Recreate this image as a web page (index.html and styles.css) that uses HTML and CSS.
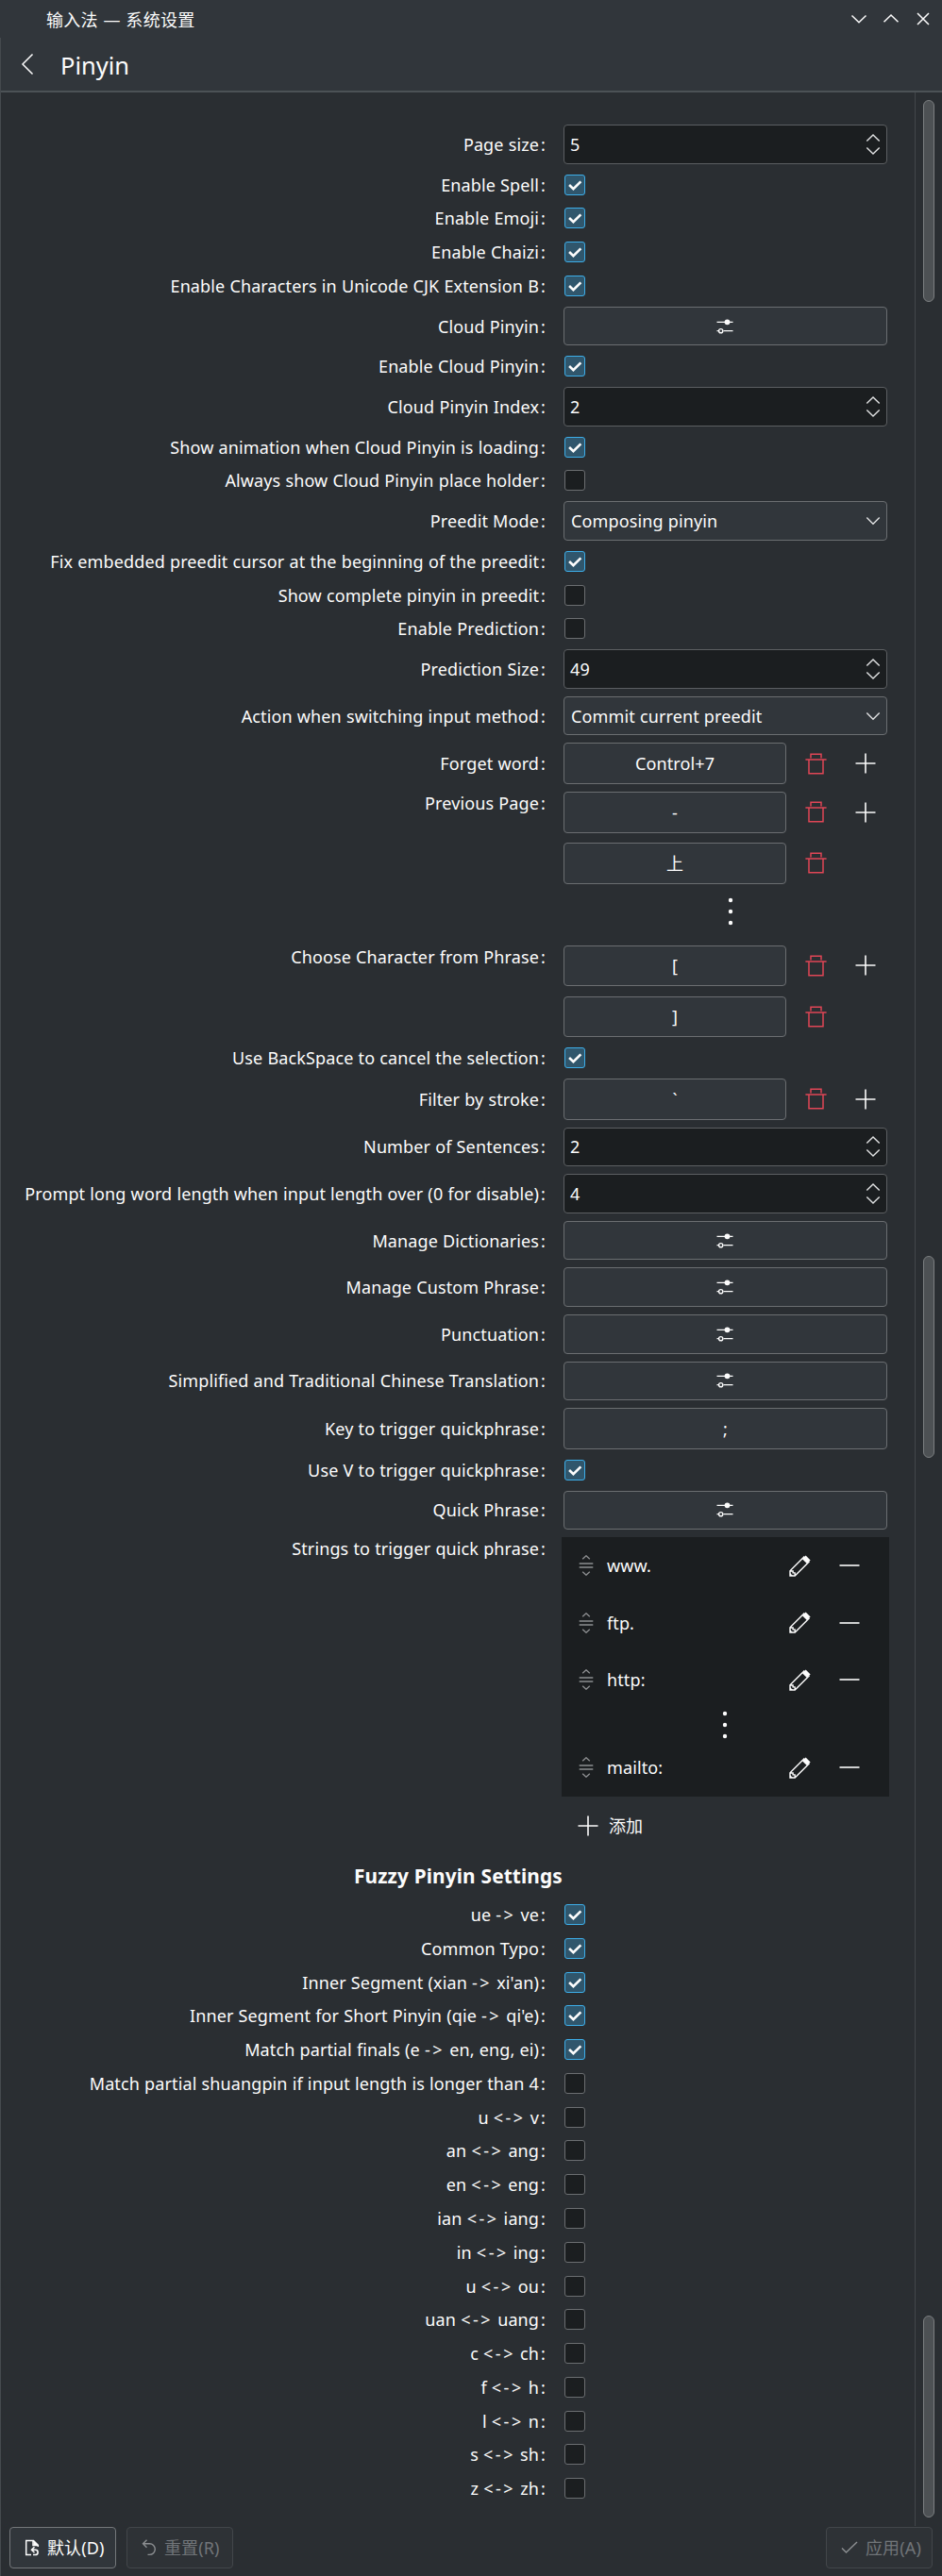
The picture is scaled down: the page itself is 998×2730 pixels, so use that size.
FILE: index.html
```html
<!DOCTYPE html>
<html lang="zh-CN">
<head>
<meta charset="utf-8">
<title>输入法 — 系统设置</title>
<link rel="stylesheet" href="styles.css">
</head>
<body>
<svg class="defs" width="0" height="0">
  <symbol id="tick" viewBox="0 0 22 22"><path d="M4.5 11 L9.3 15.6 L18 7" fill="none" stroke="#fcfcfc" stroke-width="2.9"/></symbol>
  <symbol id="sliders" viewBox="0 0 18 16"><path d="M0.5 3.3H17.5M7.5 12.7H17.5M0.5 12.7H2" fill="none" stroke="#fcfcfc" stroke-width="1.3"/><circle cx="11.5" cy="3.3" r="2.9" fill="#fcfcfc"/><circle cx="4.7" cy="12.7" r="2.1" fill="none" stroke="#fcfcfc" stroke-width="1.4"/></symbol>
  <symbol id="updown" viewBox="0 0 16 26"><path d="M1.3 9.6L8 2.9L14.7 9.6M1.3 16.4L8 23.1L14.7 16.4" fill="none" stroke="#e0e1e2" stroke-width="1.4"/></symbol>
  <symbol id="down" viewBox="0 0 16 10"><path d="M1.3 1.6L8 8.3L14.7 1.6" fill="none" stroke="#e0e1e2" stroke-width="1.4"/></symbol>
  <symbol id="trash" viewBox="0 0 23 23"><path d="M0.4 6.900H22.600M6 5.5V1.200H17V5.500M4 7V21.700H19V7" fill="none" stroke="#e04656" stroke-width="1.500"/></symbol>
  <symbol id="plus" viewBox="0 0 22 22"><path d="M0.5 11H21.5M11 0.5V21.5" fill="none" stroke="#fcfcfc" stroke-width="1.6"/></symbol>
  <symbol id="minus" viewBox="0 0 22 22"><path d="M0.5 11H21.5" fill="none" stroke="#fcfcfc" stroke-width="1.6"/></symbol>
  <symbol id="dots" viewBox="0 0 6 30"><g fill="#fcfcfc"><circle cx="3" cy="3" r="2.2"/><circle cx="3" cy="15" r="2.2"/><circle cx="3" cy="27" r="2.2"/></g></symbol>
  <symbol id="pencil" viewBox="0 0 23 23"><path d="M1 22L1 16.8L15.8 2L21 7.2L6.2 22ZM1 16.8L4.1 17V18.9H6.1L6.2 22" fill="none" stroke="#fcfcfc" stroke-width="1.4"/><path d="M14 4.2L17.6 0.4L22.6 5.4L18.8 9Z" fill="#fcfcfc"/><path d="M1 19L4 22H1Z" fill="#fcfcfc"/></symbol>
  <symbol id="handle" viewBox="0 0 16 22"><path d="M4.2 4.2L8 0.8L11.8 4.2M0.7 9H15.3M0.7 13H15.3M4.2 17.8L8 21.2L11.8 17.8" fill="none" stroke="#8c8e90" stroke-width="1.4"/></symbol>
</svg>

<div class="window">
  <header class="titlebar">
    <span class="caption">输入法 — 系统设置</span>
    <div class="winbtns">
      <svg width="18" height="18" viewBox="0 0 18 18"><path d="M1.5 5.5L9 12.7L16.500 5.500"/></svg>
      <svg width="18" height="18" viewBox="0 0 18 18"><path d="M1.5 12.2L9 5L16.500 12.200"/></svg>
      <svg width="18" height="18" viewBox="0 0 18 18"><path d="M3 3L15 15M15 3L3 15"/></svg>
    </div>
  </header>
  <div class="frame">
  <div class="pagehead">
    <svg class="back" width="14" height="24" viewBox="0 0 14 24"><path d="M12.500 1.500L2 12L12.500 22.500"/></svg>
    <h1>Pinyin</h1>
  </div>
  <div class="body">
    <main class="form">
      <div class="row box"><label>Page size<i>:</i></label><div class="field spin">5<svg><use href="#updown"/></svg></div></div>
      <div class="row"><label>Enable Spell<i>:</i></label><span class="check on"><svg><use href="#tick"/></svg></span></div>
      <div class="row"><label>Enable Emoji<i>:</i></label><span class="check on"><svg><use href="#tick"/></svg></span></div>
      <div class="row"><label>Enable Chaizi<i>:</i></label><span class="check on"><svg><use href="#tick"/></svg></span></div>
      <div class="row"><label>Enable Characters in Unicode CJK Extension B<i>:</i></label><span class="check on"><svg><use href="#tick"/></svg></span></div>
      <div class="row box"><label>Cloud Pinyin<i>:</i></label><div class="field btn"><svg><use href="#sliders"/></svg></div></div>
      <div class="row"><label>Enable Cloud Pinyin<i>:</i></label><span class="check on"><svg><use href="#tick"/></svg></span></div>
      <div class="row box"><label>Cloud Pinyin Index<i>:</i></label><div class="field spin">2<svg><use href="#updown"/></svg></div></div>
      <div class="row"><label>Show animation when Cloud Pinyin is loading<i>:</i></label><span class="check on"><svg><use href="#tick"/></svg></span></div>
      <div class="row"><label>Always show Cloud Pinyin place holder<i>:</i></label><span class="check"></span></div>
      <div class="row box"><label>Preedit Mode<i>:</i></label><div class="field combo">Composing pinyin<svg><use href="#down"/></svg></div></div>
      <div class="row"><label>Fix embedded preedit cursor at the beginning of the preedit<i>:</i></label><span class="check on"><svg><use href="#tick"/></svg></span></div>
      <div class="row"><label>Show complete pinyin in preedit<i>:</i></label><span class="check"></span></div>
      <div class="row"><label>Enable Prediction<i>:</i></label><span class="check"></span></div>
      <div class="row box"><label>Prediction Size<i>:</i></label><div class="field spin">49<svg><use href="#updown"/></svg></div></div>
      <div class="row box"><label>Action when switching input method<i>:</i></label><div class="field combo">Commit current preedit<svg><use href="#down"/></svg></div></div>
      <div class="row key"><label>Forget word<i>:</i></label><div class="keyline"><div class="field btn">Control+7</div><svg class="trash"><use href="#trash"/></svg><svg class="plus"><use href="#plus"/></svg></div></div>
      <div class="row multi"><label>Previous Page<i>:</i></label>
        <div class="keys">
          <div class="keyline"><div class="field btn">-</div><svg class="trash"><use href="#trash"/></svg><svg class="plus"><use href="#plus"/></svg></div>
          <div class="keyline"><div class="field btn">上</div><svg class="trash"><use href="#trash"/></svg></div>
          <div class="more"><svg><use href="#dots"/></svg></div>
        </div>
      </div>
      <div class="row multi"><label>Choose Character from Phrase<i>:</i></label>
        <div class="keys">
          <div class="keyline"><div class="field btn">[</div><svg class="trash"><use href="#trash"/></svg><svg class="plus"><use href="#plus"/></svg></div>
          <div class="keyline"><div class="field btn">]</div><svg class="trash"><use href="#trash"/></svg></div>
        </div>
      </div>
      <div class="row"><label>Use BackSpace to cancel the selection<i>:</i></label><span class="check on"><svg><use href="#tick"/></svg></span></div>
      <div class="row key"><label>Filter by stroke<i>:</i></label><div class="keyline"><div class="field btn">`</div><svg class="trash"><use href="#trash"/></svg><svg class="plus"><use href="#plus"/></svg></div></div>
      <div class="row box"><label>Number of Sentences<i>:</i></label><div class="field spin">2<svg><use href="#updown"/></svg></div></div>
      <div class="row box"><label>Prompt long word length when input length over (0 for disable)<i>:</i></label><div class="field spin">4<svg><use href="#updown"/></svg></div></div>
      <div class="row box"><label>Manage Dictionaries<i>:</i></label><div class="field btn"><svg><use href="#sliders"/></svg></div></div>
      <div class="row box"><label>Manage Custom Phrase<i>:</i></label><div class="field btn"><svg><use href="#sliders"/></svg></div></div>
      <div class="row box"><label>Punctuation<i>:</i></label><div class="field btn"><svg><use href="#sliders"/></svg></div></div>
      <div class="row box"><label>Simplified and Traditional Chinese Translation<i>:</i></label><div class="field btn"><svg><use href="#sliders"/></svg></div></div>
      <div class="row key"><label>Key to trigger quickphrase<i>:</i></label><div class="field btn">;</div></div>
      <div class="row"><label>Use V to trigger quickphrase<i>:</i></label><span class="check on"><svg><use href="#tick"/></svg></span></div>
      <div class="row box"><label>Quick Phrase<i>:</i></label><div class="field btn"><svg><use href="#sliders"/></svg></div></div>
      <div class="row multi strings"><label>Strings to trigger quick phrase<i>:</i></label>
        <div class="listwrap">
          <div class="list">
            <div class="item"><svg class="handle"><use href="#handle"/></svg><span>www.</span><svg class="pencil"><use href="#pencil"/></svg><svg class="plus"><use href="#minus"/></svg></div>
            <div class="item"><svg class="handle"><use href="#handle"/></svg><span>ftp.</span><svg class="pencil"><use href="#pencil"/></svg><svg class="plus"><use href="#minus"/></svg></div>
            <div class="item"><svg class="handle"><use href="#handle"/></svg><span>http:</span><svg class="pencil"><use href="#pencil"/></svg><svg class="plus"><use href="#minus"/></svg></div>
            <div class="gap"><svg><use href="#dots"/></svg></div>
            <div class="item"><svg class="handle"><use href="#handle"/></svg><span>mailto:</span><svg class="pencil"><use href="#pencil"/></svg><svg class="plus"><use href="#minus"/></svg></div>
          </div>
          <div class="add"><svg class="plus"><use href="#plus"/></svg><span>添加</span></div>
        </div>
      </div>
      <h2>Fuzzy Pinyin Settings</h2>
      <div class="row"><label>ue <b>-&gt;</b> ve<i>:</i></label><span class="check on"><svg><use href="#tick"/></svg></span></div>
      <div class="row"><label>Common Typo<i>:</i></label><span class="check on"><svg><use href="#tick"/></svg></span></div>
      <div class="row"><label>Inner Segment (xian <b>-&gt;</b> xi'an)<i>:</i></label><span class="check on"><svg><use href="#tick"/></svg></span></div>
      <div class="row"><label>Inner Segment for Short Pinyin (qie <b>-&gt;</b> qi'e)<i>:</i></label><span class="check on"><svg><use href="#tick"/></svg></span></div>
      <div class="row"><label>Match partial finals (e <b>-&gt;</b> en, eng, ei)<i>:</i></label><span class="check on"><svg><use href="#tick"/></svg></span></div>
      <div class="row"><label>Match partial shuangpin if input length is longer than 4<i>:</i></label><span class="check"></span></div>
      <div class="row"><label>u <b>&lt;-&gt;</b> v<i>:</i></label><span class="check"></span></div>
      <div class="row"><label>an <b>&lt;-&gt;</b> ang<i>:</i></label><span class="check"></span></div>
      <div class="row"><label>en <b>&lt;-&gt;</b> eng<i>:</i></label><span class="check"></span></div>
      <div class="row"><label>ian <b>&lt;-&gt;</b> iang<i>:</i></label><span class="check"></span></div>
      <div class="row"><label>in <b>&lt;-&gt;</b> ing<i>:</i></label><span class="check"></span></div>
      <div class="row"><label>u <b>&lt;-&gt;</b> ou<i>:</i></label><span class="check"></span></div>
      <div class="row"><label>uan <b>&lt;-&gt;</b> uang<i>:</i></label><span class="check"></span></div>
      <div class="row"><label>c <b>&lt;-&gt;</b> ch<i>:</i></label><span class="check"></span></div>
      <div class="row"><label>f <b>&lt;-&gt;</b> h<i>:</i></label><span class="check"></span></div>
      <div class="row"><label>l <b>&lt;-&gt;</b> n<i>:</i></label><span class="check"></span></div>
      <div class="row"><label>s <b>&lt;-&gt;</b> sh<i>:</i></label><span class="check"></span></div>
      <div class="row"><label>z <b>&lt;-&gt;</b> zh<i>:</i></label><span class="check"></span></div>
    </main>
    <aside class="scroll"><span class="thumb"></span><span class="thumb"></span><span class="thumb"></span></aside>
  </div>
  <footer class="footer">
    <div class="action"><svg width="16" height="18" viewBox="0 0 16 18"><path d="M7 16.500H1.700V1.500H9.500L14.300 6.200V8M9 2V6.500H14" fill="none" stroke="#fcfcfc" stroke-width="1.500"/><path d="M9.500 1.500L14.300 6.500H9.500Z" fill="#fcfcfc"/><path d="M10.500 8.300L7.500 11.300L10.500 14.300M7.500 11.300H11.500A2.600 2.600 0 0 1 11.500 16.500H9" fill="none" stroke="#fcfcfc" stroke-width="1.600"/></svg><span>默认(D)</span></div>
    <div class="action off"><svg width="16" height="18" viewBox="0 0 16 18"><path d="M5.500 0.800L1.500 4.800L5.500 8.800M1.500 4.800H8.500A5.800 5.800 0 0 1 8.500 16.400H6.500" fill="none" stroke="#8b8e91" stroke-width="1.400"/></svg><span>重置(R)</span></div>
    <div class="action off apply"><svg width="18" height="18" viewBox="0 0 18 18"><path d="M1 9.500L5.500 14L17 3" fill="none" stroke="#8b8e91" stroke-width="1.500"/></svg><span>应用(A)</span></div>
  </footer>
  </div>
</div>
</body>
</html>
```
FILE: styles.css
```css
* { box-sizing: border-box; }
body {
  margin: 0;
  background: #2a2e32;
  color: #fcfcfc;
  font: 18px/26px "Noto Sans", "Noto Sans CJK SC", sans-serif;
  letter-spacing: 0.12px;
  word-spacing: 0.3px;
}
svg { display: block; flex: none; }
.defs { position: absolute; }
.window { width: 998px; height: 2730px; display: flex; flex-direction: column; }

.titlebar {
  height: 40px;
  background: #31363b;
  display: flex;
  align-items: center;
  justify-content: space-between;
  padding: 2px 11px 0 49px;
}
.caption { letter-spacing: 0.3px; word-spacing: 0.6px; }
.winbtns { display: flex; gap: 16px; padding-bottom: 2px; }
.winbtns path, .back path { fill: none; stroke: #fcfcfc; stroke-width: 1.5; }

.frame { flex: 1; display: flex; flex-direction: column; border-left: 1px solid #454a4e; }
.pagehead {
  height: 58px;
  background: #31363b;
  border-bottom: 2px solid #4c5256;
  display: flex;
  align-items: center;
  gap: 28px;
  padding-left: 21px;
}
h1 { margin: 1px 0 0; font-size: 25.5px; font-weight: 400; line-height: 36px; letter-spacing: 0; }

.body { display: flex; height: 2579px; }
.form {
  width: 968px;
  padding-top: 34.2px;
  display: flex;
  flex-direction: column;
  gap: 8px;
}
.row { display: flex; align-items: center; height: 27.77px; }
.row.box { height: 41.6px; }
.row.key { height: 43.7px; }
.row.multi { height: auto; align-items: flex-start; }
label { width: 577px; margin-right: 19px; text-align: right; white-space: nowrap; }
label i { font-style: normal; margin-left: 2px; }
label b { font-weight: 400; letter-spacing: 2.5px; }
.multi > label { line-height: 24px; }

.check {
  width: 22px;
  height: 22px;
  margin-left: 1px;
  border: 1px solid #6b6e71;
  border-radius: 3px;
  background: #1b1e20;
}
.check.on { border-color: #3daee9; background: #30566c; }
.check svg { width: 20px; height: 20px; }

.field {
  width: 343px;
  height: 100%;
  border: 1px solid #6b6e71;
  border-radius: 4px;
  display: flex;
  align-items: center;
  justify-content: space-between;
  background: #31363b;
}
.spin { background: #1b1e20; padding: 0 6px 0 6px; border-color: #5c5f62; }
.spin svg { width: 16px; height: 26px; }
.combo { padding: 0 6px 0 7px; }
.combo svg { width: 16px; height: 10px; }
.btn { justify-content: center; }
.btn svg { width: 18px; height: 16px; margin-right: 1px; }

.keyline { display: flex; align-items: center; height: 43.6px; }
.keyline .field { width: 236px; }
.trash { width: 23px; height: 23px; margin: 0 30px 0 20px; }
.plus { width: 22px; height: 22px; }
.keys { display: flex; flex-direction: column; gap: 10.4px; }
.more { width: 354px; height: 46.5px; display: flex; justify-content: center; padding-top: 3.5px; }
.more svg, .gap svg { width: 6px; height: 30px; }

.strings { margin-bottom: 2px; }
.listwrap { margin-left: -2px; }
.list { width: 347px; height: 275px; background: #1b1e20; }
.item { height: 60.4px; display: flex; align-items: center; padding: 0 31px 0 18px; }
.item span { flex: 1; margin-left: 14px; }
.handle { width: 16px; height: 22px; }
.pencil { width: 23px; height: 23px; margin-right: 30px; }
.gap { width: 346px; height: 32.6px; display: flex; justify-content: center; padding-top: 2.5px; }
.add { height: 62px; display: flex; align-items: center; gap: 11px; padding-left: 17px; }

h2 { margin: -3px 0 3px 374px; font-size: 20.8px; line-height: 31px; }

.scroll {
  flex: 1;
  border-left: 1px solid #43474b;
  display: flex;
  flex-direction: column;
  justify-content: space-between;
  align-items: flex-end;
  padding: 8px 8px 9px 0;
}
.thumb { width: 12px; height: 214px; border: 1px solid #7b7e80; border-radius: 6px; background: #4d5154; }
.scroll .thumb:nth-child(2) { margin-top: 102px; }

.footer { display: flex; gap: 11px; padding: 1px 10px 0 9px; }
.action {
  width: 113px;
  height: 44px;
  border: 1px solid #74777a;
  border-radius: 4px;
  background: #31363b;
  display: flex;
  align-items: center;
  gap: 8px;
  padding-left: 15px;
  white-space: nowrap;
}
.action.off { border-color: #42464a; background: #2e3236; color: #717579; }
.apply { margin-left: auto; }
```
